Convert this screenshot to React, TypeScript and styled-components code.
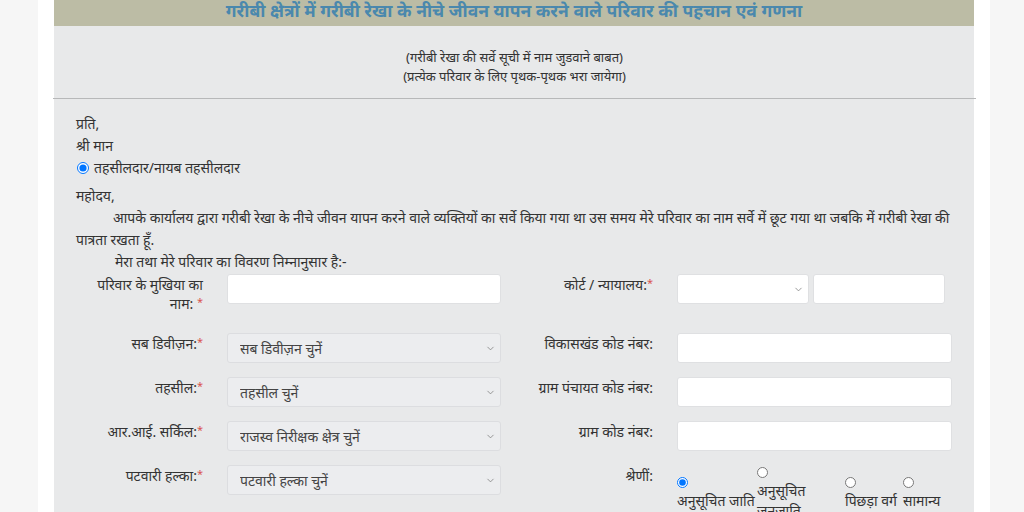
import React from "react";
import styled, { createGlobalStyle } from "styled-components";
import { ChevronDown } from "lucide-react";

const GlobalStyle = createGlobalStyle`
  html, body {
    margin: 0;
    padding: 0;
    background: #f6f6f6;
    font-family: "Noto Sans", "Liberation Sans", sans-serif;
    color: #333;
  }
`;

const Page = styled.div`
  width: 920px;
  margin-left: 38px;
  padding: 0 16px;
  background: #ffffff;
  height: 512px;
  overflow: hidden;
`;

const Panel = styled.div`
  background: #e8e9ea;
  min-height: 512px;
`;

const TitleBar = styled.div`
  height: 26px;
  background: #bcbca5;
  display: flex;
  align-items: flex-end;
  justify-content: center;
  overflow: hidden;
`;

const Title = styled.h2`
  margin: 0 0 5px;
  font-size: 17.5px;
  line-height: 22px;
  font-weight: 700;
  color: #4a88ad;
`;

const Notes = styled.div`
  padding: 22px 0 12px;
  border-bottom: 1px solid #b7b8b9;
  margin: 0 -2px 0 -1px;
  text-align: center;
  font-size: 13px;
  line-height: 19px;
`;

const Body = styled.div`
  padding: 14px 21px 0 22px;
  font-size: 14px;
  line-height: 22px;
`;

const Line = styled.div<{ $indent?: number; $gap?: number }>`
  text-indent: ${(p) => p.$indent || 0}px;
  margin-top: ${(p) => p.$gap || 0}px;
`;

const RadioLine = styled.label`
  display: flex;
  align-items: center;
  gap: 5px;
  input {
    margin: 0 0 0 1px;
    width: 12px;
    height: 12px;
  }
`;

const Form = styled.div`
  display: grid;
  grid-template-columns: 149px 274px 128px 275px;
  column-gap: 24px;
  row-gap: 14px;
  grid-template-rows: 45px 30px 30px 30px 60px;
  margin-top: 1px;
`;

const Label = styled.div`
  text-align: right;
  font-size: 14px;
  line-height: 19px;
  padding-top: 1px;
  white-space: nowrap;
`;

const Req = styled.span`
  color: #d9534f;
  font-size: 11px;
  vertical-align: top;
  line-height: 16px;
`;

const TextInput = styled.input<{ $width?: number }>`
  box-sizing: border-box;
  width: ${(p) => (p.$width ? `${p.$width}px` : "100%")};
  height: 30px;
  border: 1px solid #dfe0e2;
  border-radius: 3px;
  background: #ffffff;
  padding: 0 12px;
  font: inherit;
`;

const SelectWrap = styled.div<{ $width?: number; $light?: boolean }>`
  position: relative;
  width: ${(p) => (p.$width ? `${p.$width}px` : "100%")};
  height: 30px;

  select {
    box-sizing: border-box;
    appearance: none;
    width: 100%;
    height: 30px;
    border: 1px solid ${(p) => (p.$light ? "#dfe0e2" : "#dcdde0")};
    border-radius: 3px;
    background: ${(p) => (p.$light ? "#ffffff" : "#ecedef")};
    padding: 0 12px;
    font-family: "Noto Sans", "Liberation Sans", sans-serif;
    font-size: 14px;
    color: #444;
  }

  svg {
    position: absolute;
    right: 5px;
    top: 10px;
    color: #777;
    pointer-events: none;
  }
`;

const Pair = styled.div`
  display: flex;
  gap: 4px;
`;

const Options = styled.div`
  display: flex;
  align-items: center;
  margin-top: 2px;
  align-self: start;
`;

const Option = styled.label<{ $width: number; $wrap?: boolean }>`
  width: ${(p) => p.$width}px;
  flex: none;
  font-size: 14px;
  line-height: 20px;
  white-space: ${(p) => (p.$wrap ? "normal" : "nowrap")};

  input {
    display: block;
    margin: 0 0 3px 0;
    width: 11px;
    height: 11px;
  }
`;

const Select = ({
  text,
  width,
  light,
}: {
  text?: string;
  width?: number;
  light?: boolean;
}) => (
  <SelectWrap $width={width} $light={light}>
    <select defaultValue="">
      <option value="">{text || ""}</option>
    </select>
    <ChevronDown size={11} strokeWidth={1.6} />
  </SelectWrap>
);

const App = () => {
  return (
    <>
      <GlobalStyle />
      <Page>
        <Panel>
          <TitleBar>
            <Title>
              गरीबी क्षेत्रों में गरीबी रेखा के नीचे जीवन यापन करने वाले परिवार की पहचान एवं गणना
            </Title>
          </TitleBar>
          <Notes>
            <div>(गरीबी रेखा की सर्वे सूची में नाम जुडवाने बाबत)</div>
            <div>(प्रत्येक परिवार के लिए पृथक-पृथक भरा जायेगा)</div>
          </Notes>

          <Body>
            <Line>प्रति,</Line>
            <Line>श्री मान</Line>
            <RadioLine>
              <input type="radio" name="officer" defaultChecked />
              तहसीलदार/नायब तहसीलदार
            </RadioLine>
            <Line $gap={6}>महोदय,</Line>
            <Line $indent={37}>
              आपके कार्यालय द्वारा गरीबी रेखा के नीचे जीवन यापन करने वाले व्यक्तियों का सर्वे
              किया गया था उस समय मेरे परिवार का नाम सर्वे में छूट गया था जबकि में गरीबी रेखा की
              पात्रता रखता हूँ.
            </Line>
            <Line $indent={39}>मेरा तथा मेरे परिवार का विवरण निम्नानुसार है:-</Line>
          </Body>

          <Form>
            <Label>
              परिवार के मुखिया का
              <br />
              नाम: <Req>*</Req>
            </Label>
            <TextInput />
            <Label>
              कोर्ट / न्यायालय:<Req>*</Req>
            </Label>
            <Pair>
              <Select width={132} light />
              <TextInput $width={132} />
            </Pair>

            <Label>
              सब डिवीज़न:<Req>*</Req>
            </Label>
            <Select text="सब डिवीज़न चुनें" />
            <Label>विकासखंड कोड नंबर:</Label>
            <TextInput />

            <Label>
              तहसील:<Req>*</Req>
            </Label>
            <Select text="तहसील चुनें" />
            <Label>ग्राम पंचायत कोड नंबर:</Label>
            <TextInput />

            <Label>
              आर.आई. सर्किल:<Req>*</Req>
            </Label>
            <Select text="राजस्व निरीक्षक क्षेत्र चुनें" />
            <Label>ग्राम कोड नंबर:</Label>
            <TextInput />

            <Label>
              पटवारी हल्का:<Req>*</Req>
            </Label>
            <Select text="पटवारी हल्का चुनें" />
            <Label>श्रेणीं:</Label>
            <Options>
              <Option $width={80}>
                <input type="radio" name="category" defaultChecked />
                अनुसूचित जाति
              </Option>
              <Option $width={88} $wrap>
                <input type="radio" name="category" />
                अनुसूचित
                <br />
                जनजाति
              </Option>
              <Option $width={58}>
                <input type="radio" name="category" />
                पिछड़ा वर्ग
              </Option>
              <Option $width={50}>
                <input type="radio" name="category" />
                सामान्य
              </Option>
            </Options>
          </Form>
        </Panel>
      </Page>
    </>
  );
};

export default App;
